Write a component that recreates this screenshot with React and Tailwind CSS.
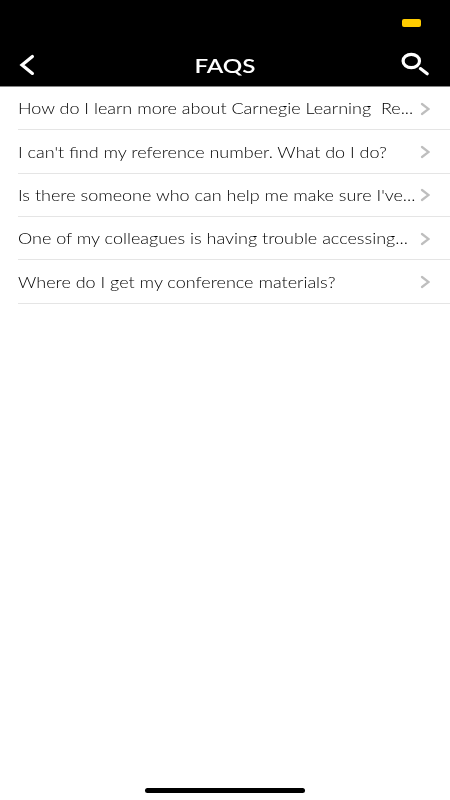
const faqs = [
  "How do I learn more about Carnegie Learning\u00a0 Re...",
  "I can't find my reference number. What do I do?",
  "Is there someone who can help me make sure I've...",
  "One of my colleagues is having trouble accessing...",
  "Where do I get my conference materials?",
];

export default function App() {
  return (
    <div className="flex h-screen w-full flex-col overflow-hidden bg-white font-['Lato',sans-serif]">
      <header className="h-[87px] shrink-0 border-b border-[#858585] bg-black text-white">
        <div className="flex h-[43px] justify-end pr-[29px] pt-[19px]">
          <span className="h-2 w-[19px] rounded-[2px] bg-[#ffcc00]" />
        </div>
        <div className="grid h-[43px] grid-cols-3 items-center">
          <svg className="ml-[19px] h-[22px] w-4" viewBox="0 0 16 22" fill="none" stroke="currentColor" strokeWidth="3.2" strokeLinecap="round">
            <path d="M13.4 2.4 3 11l10.4 8.4" />
          </svg>
          <h1 className="scale-x-[1.21] text-center text-[20px] font-semibold will-change-transform">FAQS</h1>
          <svg className="mr-5 h-6 w-[30px] justify-self-end overflow-visible" viewBox="0 0 30 24" fill="none" stroke="currentColor" strokeWidth="3.2">
            <ellipse cx="11.3" cy="8" rx="8.2" ry="6.7" />
            <path d="m20.4 15.6 6.8 5.2" strokeLinecap="round" />
          </svg>
        </div>
      </header>

      <ul className="flex-1">
        {faqs.map((q) => (
          <li key={q} className="ml-[18px] flex h-[43.35px] items-center justify-between border-b border-[#e5e5e5] pr-5 pt-px">
            <span className="origin-left scale-x-120 whitespace-nowrap text-[15px] font-light text-black will-change-transform">
              {q}
            </span>
            <svg className="h-[14px] w-[10px] shrink-0" viewBox="0 0 10 14" fill="none" stroke="#bebebe" strokeWidth="2.2" strokeLinecap="round">
              <path d="m2 2 6.6 5L2 12" />
            </svg>
          </li>
        ))}
      </ul>

      {/* Home indicator */}
      <div className="mb-[7.5px] h-[5px] w-40 shrink-0 self-center rounded-full bg-black" />
    </div>
  );
}
